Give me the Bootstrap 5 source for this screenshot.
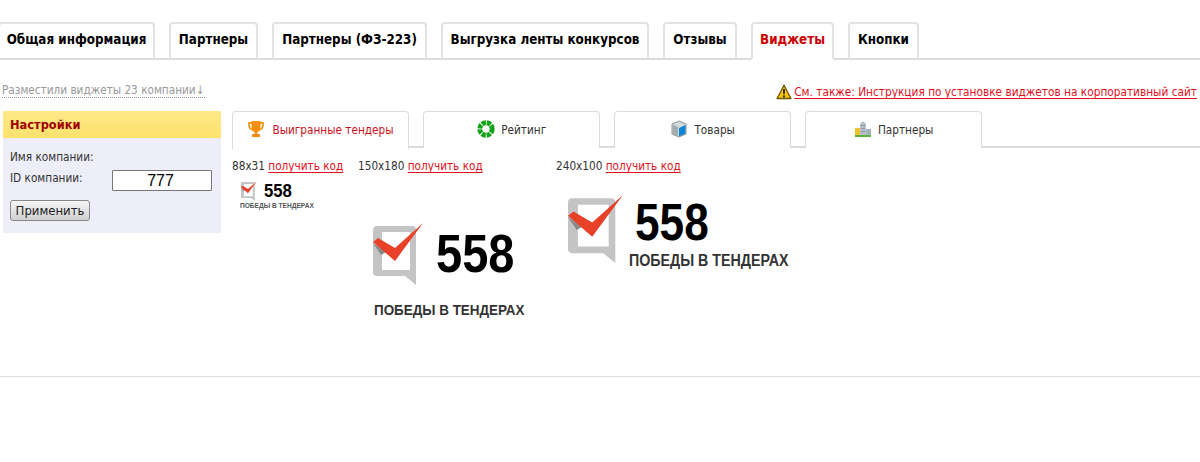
<!DOCTYPE html>
<html>
<head>
  <meta charset="UTF-8">
  <title>Виджеты</title>
  <link href="https://cdn.jsdelivr.net/npm/bootstrap@5.3.0/dist/css/bootstrap.min.css" rel="stylesheet">
  <style>
    body { font-family: "DejaVu Sans Condensed", "DejaVu Sans", sans-serif; font-size: 11.7px; color: #222; background: #fff; }
    a { color: #e1111d; }

    .top-tabs { height: 60px; padding-top: 22px; gap: 14px; border-bottom: 2px solid #dcdcdc; flex-wrap: nowrap; }
    .top-tabs .nav-link { height: 38px; margin-bottom: -2px; padding: 0; line-height: 32px; font-size: 13.3px; font-weight: 700; text-align: center; white-space: nowrap; color: #000; background: #fff; border: 2px solid #e2e2e2; border-bottom-color: #dcdcdc; border-radius: 4px 4px 0 0; }
    .top-tabs .nav-link.active { color: #cc0000; border-bottom-color: #fff; }
    .top-tabs .nav-item:nth-child(1) { width: 157px; margin-left: -2px; }
    .top-tabs .nav-item:nth-child(2) { width: 89px; }
    .top-tabs .nav-item:nth-child(3) { width: 155px; }
    .top-tabs .nav-item:nth-child(4) { width: 208px; }
    .top-tabs .nav-item:nth-child(5) { width: 74px; }
    .top-tabs .nav-item:nth-child(6) { width: 83px; }
    .top-tabs .nav-item:nth-child(7) { width: 71px; }

    .info-row { height: 51px; padding: 24px 3px 0 2px; color: #444; }
    .hint-link { line-height: 13px; color: #999; text-decoration: none; border-bottom: 1px dotted #999; }
    .warn-line { line-height: 13px; }
    .warn-link { font-size: 11.76px; text-underline-offset: 2px; }
    .warn-ico { width: 16px; height: 16px; margin-right: 2px; vertical-align: -4px; }

    .settings-box { width: 218px; height: 122px; margin-left: 3px; flex: none; background: #eeeefa; }
    .settings-head { height: 27px; padding-left: 7px; line-height: 28px; font-size: 12.7px; font-weight: 700; color: #a00000; background: linear-gradient(#ffe88a, #fde26c); }
    .settings-body { padding: 11px 9px 0 7px; color: #333; }
    .settings-line { height: 21px; line-height: 17px; }
    .id-input { width: 100px; height: 21px; padding: 1px 3px 0 0; font-family: "Liberation Sans", sans-serif; font-size: 16px; line-height: 19px; text-align: center; color: #000; background: #fff; border: 1px solid #777; border-radius: 1px; }
    .apply-btn { width: 80px; height: 21px; margin-top: 9px; padding: 0; font-size: 13px; line-height: 18px; color: #222; background: linear-gradient(#f6f6f6, #d0d0d0); border: 1px solid #888; border-radius: 3px; }

    .widgets-col { margin-left: 11px; flex: 1; min-width: 0; }
    .widget-tabs { height: 37px; gap: 14px; border-bottom: 2px solid #dcdcdc; }
    .widget-tabs .nav-link { width: 177px; height: 37px; padding: 0; line-height: 37px; text-align: center; color: #333; background: #fff; border: 1px solid #dcdcdc; border-bottom: 0; border-radius: 4px 4px 0 0; }
    .widget-tabs .nav-link.active { height: 38px; color: #c8101c; }
    .tab-ico { width: 18px; height: 18px; margin-right: 3px; vertical-align: -4px; }
    .tab-ico-wide { margin-right: 7px; }

    .widget-grid { height: 228px; padding-top: 10px; }
    .size-a { width: 126px; }
    .size-b { width: 198px; }
    .size-label { height: 16px; line-height: 16px; white-space: nowrap; color: #333; }
    .size-label a { text-underline-offset: 2px; }

    .logo-num { display: block; font-family: "Liberation Sans", sans-serif; font-weight: 700; color: #000; line-height: 1; transform-origin: left center; white-space: nowrap; }
    .logo-sub { display: block; font-family: "Liberation Sans", sans-serif; font-weight: 700; color: #333; line-height: 1; transform-origin: left center; white-space: nowrap; }

    .logo-a { margin: 7px 0 0 9px; }
    .logo-a .logo-mark { width: 16px; height: 20px; }
    .logo-a .logo-num { margin: 0 0 0 7px; font-size: 19px; transform: scaleX(.88); }
    .logo-a .logo-sub { margin: 2px 0 0 -1px; font-size: 6.6px; color: #555; }

    .logo-b { margin: 49px 0 0 15px; }
    .logo-b .logo-mark { width: 50px; height: 62px; }
    .logo-b .logo-num { margin: 3px 0 0 13px; font-size: 54px; transform: scaleX(.87); }
    .logo-b .logo-sub { margin: 18px 0 0 1px; font-size: 14px; transform: scaleX(.96); }

    .logo-c { margin: 21px 0 0 12px; }
    .logo-c .logo-mark { width: 55px; height: 68px; }
    .logo-c .logo-right { margin-left: 6px; }
    .logo-c .logo-num { margin: 1px 0 0 6px; font-size: 52px; transform: scaleX(.85); }
    .logo-c .logo-sub { margin-top: 5px; font-size: 16px; transform: scaleX(.89); }

    .page-rule { height: 1px; background: #dedede; }
  </style>
</head>
<body>
  <svg width="0" height="0" class="position-absolute">
    <symbol id="mark" viewBox="0 0 50 62" preserveAspectRatio="none">
      <path fill-rule="evenodd" d="M4 3H39q4 0 4 4V62L32 53H4q-4 0-4-4V7q0-4 4-4zM9 9V47H37V9z" fill="#c4c4c4"/>
      <path d="M0 20l8 12 5-3z" fill="#8a8a8a"/>
      <path d="M0 19l5-4 17 10L50 0 22 38z" fill="#e8412a"/>
    </symbol>
  </svg>

  <ul class="nav top-tabs">
    <li class="nav-item"><a class="nav-link" href="#">Общая информация</a></li>
    <li class="nav-item"><a class="nav-link" href="#">Партнеры</a></li>
    <li class="nav-item"><a class="nav-link" href="#">Партнеры (ФЗ-223)</a></li>
    <li class="nav-item"><a class="nav-link" href="#">Выгрузка ленты конкурсов</a></li>
    <li class="nav-item"><a class="nav-link" href="#">Отзывы</a></li>
    <li class="nav-item"><a class="nav-link active" href="#">Виджеты</a></li>
    <li class="nav-item"><a class="nav-link" href="#">Кнопки</a></li>
  </ul>

  <div class="info-row d-flex justify-content-between">
    <a class="hint-link align-self-start" href="#">Разместили виджеты 23 компании↓</a>
    <span class="warn-line">
      <svg class="warn-ico" viewBox="0 0 16 16"><path d="M8 1.2l7 13.3H1z" fill="#f7c600" stroke="#6e5500" stroke-width="1.3" stroke-linejoin="round"/><path d="M7 5.2h2l-.4 5.3H7.4zM7.1 11.4h1.8v1.8H7.1z" fill="#111"/></svg><a class="warn-link" href="#">См. также: Инструкция по установке виджетов на корпоративный сайт</a>
    </span>
  </div>

  <div class="d-flex">
    <div class="settings-box">
      <div class="settings-head">Настройки</div>
      <div class="settings-body">
        <div class="settings-line">Имя компании:</div>
        <div class="settings-line d-flex justify-content-between">
          <span>ID компании:</span>
          <input class="id-input" type="text" value="777">
        </div>
        <button class="apply-btn" type="button">Применить</button>
      </div>
    </div>

    <div class="widgets-col">
      <ul class="nav widget-tabs">
        <li class="nav-item">
          <a class="nav-link active" href="#">
            <svg class="tab-ico tab-ico-wide" viewBox="0 0 18 18"><path d="M2 3h14v2q0 4-4 5H6Q2 9 2 5z" fill="none" stroke="#f59a23" stroke-width="1.8"/><path d="M4.5 1h9v6q0 4-3.2 5v2H13v3H5v-3h2.700v-2Q4.500 11 4.500 7z" fill="#f58f12"/></svg>Выигранные тендеры
          </a>
        </li>
        <li class="nav-item">
          <a class="nav-link" href="#">
            <svg class="tab-ico" viewBox="0 0 18 18"><circle cx="9" cy="9" r="6.200" fill="none" stroke="#13a318" stroke-width="5" stroke-dasharray="4 .87"/></svg>
            Рейтинг
          </a>
        </li>
        <li class="nav-item">
          <a class="nav-link" href="#">
            <svg class="tab-ico" viewBox="0 0 18 18"><path d="M2 4l7-3 7 3v10l-7 3-7-3z" fill="#d5dadd" stroke="#8c9499"/><path d="M2.500 4.500L8 7v9l-5.500-2.500z" fill="#a3abb0"/><path d="M9 8l6.500-3v8.500L9 16.500z" fill="#0f85d6"/></svg>
            Товары
          </a>
        </li>
        <li class="nav-item">
          <a class="nav-link" href="#">
            <svg class="tab-ico" viewBox="0 0 18 18"><path d="M6 4l3-3 3 3v12H6z" fill="#b5c0c8"/><path d="M1 8h5v8H1z" fill="#f1c22c"/><path d="M12 9h5v7h-5z" fill="#a5b2ba"/><path d="M1 15h16v2H1z" fill="#58b13a"/><path d="M7.500 5h1v1h-1zM9.500 5h1v1h-1zM7.500 8h1v1h-1zM9.500 8h1v1h-1zM7.500 11h1v1h-1zM9.500 11h1v1h-1z" fill="#667"/></svg>
            Партнеры
          </a>
        </li>
      </ul>

      <div class="widget-grid d-flex">
        <div class="size-a">
          <div class="size-label">88x31 <a href="#">получить код</a></div>
          <div class="logo-a">
            <div class="d-flex">
              <svg class="logo-mark"><use href="#mark" width="100%" height="100%"/></svg>
              <span class="logo-num">558</span>
            </div>
            <span class="logo-sub">ПОБЕДЫ В ТЕНДЕРАХ</span>
          </div>
        </div>
        <div class="size-b">
          <div class="size-label">150x180 <a href="#">получить код</a></div>
          <div class="logo-b">
            <div class="d-flex">
              <svg class="logo-mark"><use href="#mark" width="100%" height="100%"/></svg>
              <span class="logo-num">558</span>
            </div>
            <span class="logo-sub">ПОБЕДЫ В ТЕНДЕРАХ</span>
          </div>
        </div>
        <div>
          <div class="size-label">240x100 <a href="#">получить код</a></div>
          <div class="logo-c d-flex">
            <svg class="logo-mark"><use href="#mark" width="100%" height="100%"/></svg>
            <div class="logo-right">
              <span class="logo-num">558</span>
              <span class="logo-sub">ПОБЕДЫ В ТЕНДЕРАХ</span>
            </div>
          </div>
        </div>
      </div>
    </div>
  </div>

  <div class="page-rule"></div>
</body>
</html>
